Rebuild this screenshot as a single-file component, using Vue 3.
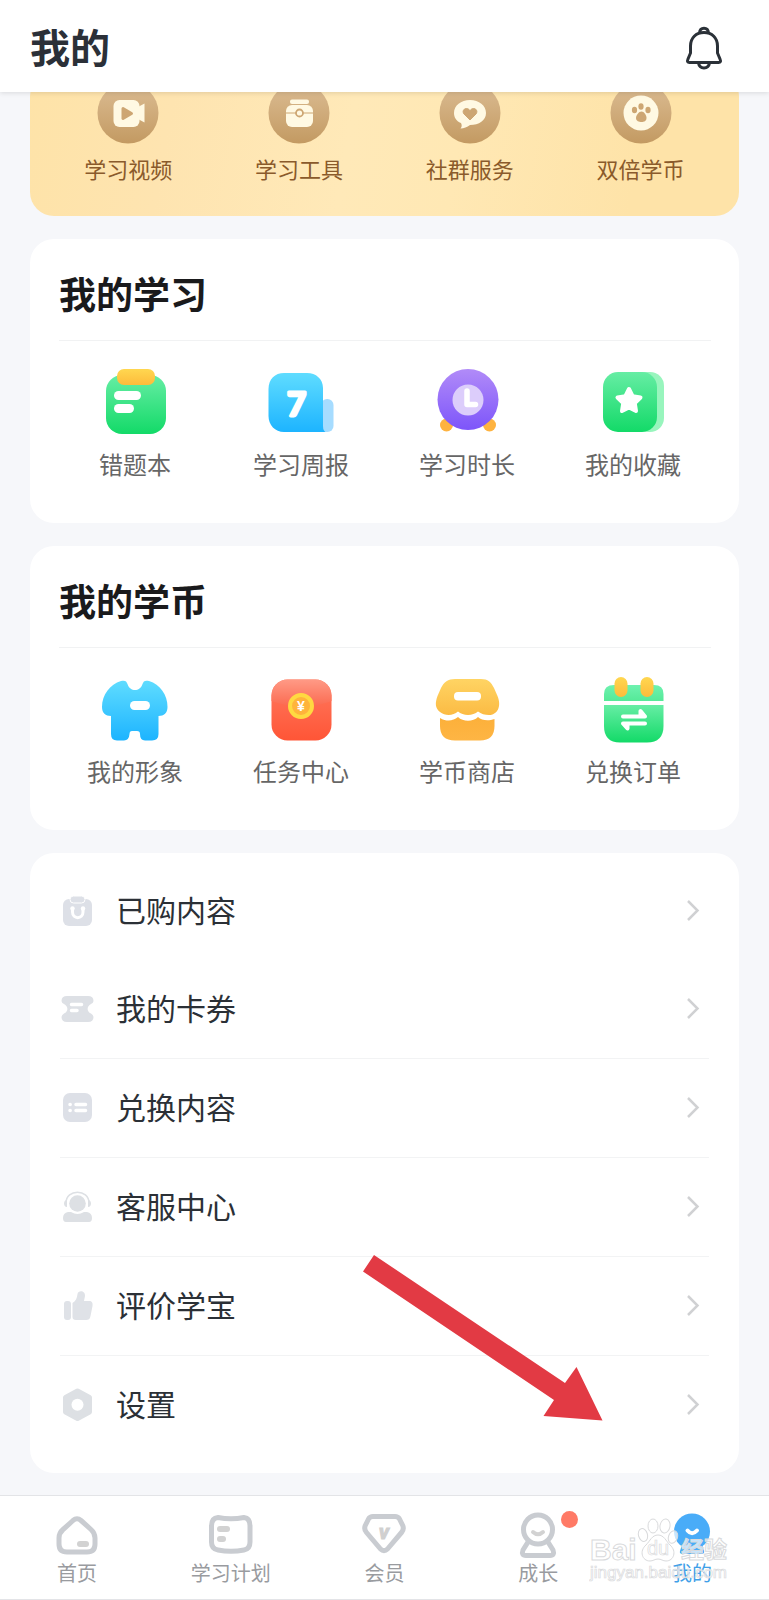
<template>
  <div class="page">
    <!-- Shared gradients -->
    <svg class="defs" aria-hidden="true">
      <defs>
        <linearGradient
          v-for="g in gradients"
          :id="g.id"
          :key="g.id"
          x1="0"
          y1="0"
          x2="0"
          y2="1"
        >
          <stop offset="0" :stop-color="g.from" />
          <stop offset="1" :stop-color="g.to" />
        </linearGradient>
      </defs>
    </svg>

    <header class="top-bar">
      <h1 class="top-title">我的</h1>
      <button class="bell-btn" type="button" aria-label="消息">
        <svg viewBox="0 0 48 48" fill="none" stroke="#2b3138" stroke-width="3" stroke-linejoin="round">
          <path d="M10.500 29V22C10.500 14 16 8.500 24 8.500S37.500 14 37.500 22V29L40 35C41 37.500 40.500 38.500 38.500 38.500H9.500C7.500 38.500 7 37.500 8 35Z" />
          <path d="M19.500 9C20 2.500 28 2.500 28.500 9" />
          <path d="M18.500 39C19.500 45.500 28.500 45.500 29.500 39" />
        </svg>
      </button>
    </header>

    <main class="content">
      <section class="banner">
        <a v-for="item in benefits" :key="item.name" class="banner-item" href="#">
          <svg class="banner-icon" viewBox="0 0 62 62" v-html="item.icon"></svg>
          <span>{{ item.name }}</span>
        </a>
      </section>

      <section v-for="card in cards" :key="card.title" class="card">
        <h2 class="card-title">{{ card.title }}</h2>
        <div class="card-grid">
          <a v-for="item in card.items" :key="item.name" class="grid-item" href="#">
            <svg class="grid-icon" viewBox="0 0 72 72" v-html="item.icon"></svg>
            <span>{{ item.name }}</span>
          </a>
        </div>
      </section>

      <section class="menu">
        <a
          v-for="row in menuRows"
          :key="row.name"
          class="menu-row"
          :class="{ lined: row.lined }"
          href="#"
        >
          <svg class="menu-icon" viewBox="0 0 36 36" v-html="row.icon"></svg>
          <span class="menu-name">{{ row.name }}</span>
          <svg class="chevron" viewBox="0 0 16 24">
            <path d="M3 2L12.500 11.500L3 21" fill="none" stroke="#d0d1d3" stroke-width="2.500" />
          </svg>
        </a>
        <svg class="pointer" viewBox="0 0 242 168" aria-hidden="true">
          <path d="M12 1L203 129L214.500 113L240.500 166.500L181.500 162L192 146L1 17.500Z" fill="#e23a44" />
        </svg>
      </section>
    </main>

    <nav class="tab-bar">
      <a
        v-for="tab in tabs"
        :key="tab.name"
        class="tab"
        :class="{ active: tab.active }"
        href="#"
      >
        <span class="tab-icon">
          <svg viewBox="0 0 48 48" v-html="tab.icon"></svg>
          <i v-if="tab.dot" class="dot"></i>
        </span>
        <span>{{ tab.name }}</span>
      </a>

      <svg class="watermark" viewBox="0 0 144 76" aria-hidden="true">
        <g fill="#fff" fill-opacity="0.7" stroke="#d9dadc" stroke-width="1">
          <ellipse cx="54" cy="22" rx="4.500" ry="6.500" transform="rotate(-16 54 22)" />
          <ellipse cx="64" cy="13" rx="5" ry="7" />
          <ellipse cx="76" cy="13" rx="5" ry="7" transform="rotate(10 76 13)" />
          <ellipse cx="84" cy="24" rx="4.500" ry="6.500" transform="rotate(20 84 24)" />
          <path d="M69 22C75 22 77 28 81 32C88 38 85 48 77 48C74 48 72 46 69 46S64 48 61 48C53 48 50 38 57 32C61 28 63 22 69 22Z" />
          <text x="1" y="47" font-size="30" font-weight="bold">Bai</text>
          <text x="58" y="42" font-size="20" stroke-width="0.700">du</text>
          <text x="92" y="45" font-size="23" font-weight="bold">经验</text>
          <text x="1" y="65" font-size="17" stroke-width="0.700">jingyan.baidu.com</text>
        </g>
      </svg>
    </nav>
  </div>
</template>

<script setup>
const gradients = [
  { id: 'bronze', from: '#dcbd94', to: '#c39a62' },
  { id: 'green', from: '#66eda4', to: '#13da68' },
  { id: 'mint', from: '#6ef2b0', to: '#55e998' },
  { id: 'yellow', from: '#ffd750', to: '#fdbb3b' },
  { id: 'blue', from: '#5fdcff', to: '#1db4ff' },
  { id: 'purple', from: '#b18bf8', to: '#7d55fa' },
  { id: 'red', from: '#ff7a60', to: '#ff5536' },
  { id: 'flap', from: '#ff9a86', to: '#fb6a50' },
  { id: 'roof', from: '#ffd463', to: '#fbbb44' },
  { id: 'shop', from: '#fcb03a', to: '#feb544' },
]

const disc = '<circle cx="31" cy="31" r="30.500" fill="url(#bronze)"/>'

const benefits = [
  {
    name: '学习视频',
    icon: `${disc}
      <rect x="16.500" y="18" width="26" height="27" rx="6" fill="#fff9e3"/>
      <path d="M41 25L47.500 21.500V40.500L41 37Z" fill="#fff9e3"/>
      <path d="M26 26.500L34.500 31.500L26 36.500Z" fill="#cda673" stroke="#cda673" stroke-width="3" stroke-linejoin="round"/>`,
  },
  {
    name: '学习工具',
    icon: `${disc}
      <rect x="22" y="17.500" width="19" height="4.500" rx="2" fill="#fff9e3"/>
      <rect x="18" y="23" width="27" height="22" rx="6" fill="#fff9e3"/>
      <path d="M18 31H45" stroke="#cda673" stroke-width="1"/>
      <circle cx="31.500" cy="31" r="3.500" fill="#fff9e3" stroke="#cda673" stroke-width="1.800"/>`,
  },
  {
    name: '社群服务',
    icon: `${disc}
      <path d="M31 18C40 18 47 23.500 47 31S40 43 31 43C28 45 25 46.500 21.500 46.500C23 45 23 43 22 41C17 39 15 35 15 31C15 23.500 22 18 31 18Z" fill="#fff9e3"/>
      <path d="M31 38L25 32C22 28 27.500 24 31 28.500C34.500 24 40 28 37 32Z" fill="#cda673" stroke="#cda673" stroke-linejoin="round"/>`,
  },
  {
    name: '双倍学币',
    icon: `${disc}
      <circle cx="31" cy="31" r="17.500" fill="#fff9e3"/>
      <g fill="#cda673">
        <ellipse cx="24.500" cy="28" rx="2.600" ry="3.300"/>
        <ellipse cx="31" cy="24.500" rx="2.600" ry="3.300"/>
        <ellipse cx="38" cy="28" rx="2.600" ry="3.300"/>
        <path d="M31.500 29.500C34 29.500 36.500 33 36.500 36S34 40 31.500 40S26 39 26 36S29 29.500 31.500 29.500Z"/>
      </g>`,
  },
]

const cards = [
  {
    title: '我的学习',
    items: [
      {
        name: '错题本',
        icon: `
          <rect x="7" y="9" width="60" height="59" rx="16" fill="url(#green)"/>
          <rect x="18" y="3" width="38" height="16" rx="7" fill="url(#yellow)"/>
          <rect x="15" y="25" width="27" height="9" rx="4.500" fill="#fff"/>
          <rect x="15" y="38" width="20" height="9" rx="4.500" fill="#fff"/>`,
      },
      {
        name: '学习周报',
        icon: `
          <rect x="56" y="33" width="12.500" height="33" rx="6" fill="#a6dcff"/>
          <path d="M19 7H42C51 7 58 13 58 22V60Q58 66 62 66H19C10 66 3.500 59 3.500 50V23C3.500 13 10 7 19 7Z" fill="url(#blue)"/>
          <text x="22" y="50" font-family="Lato, sans-serif" font-size="33" font-weight="bold" fill="#fff" stroke="#fff" stroke-width="3" stroke-linejoin="round">7</text>`,
      },
      {
        name: '学习时长',
        icon: `
          <circle cx="15.500" cy="59" r="6.500" fill="#feb340"/>
          <circle cx="58.500" cy="59" r="6.500" fill="#feb340"/>
          <circle cx="37" cy="33.500" r="30.500" fill="url(#purple)"/>
          <circle cx="37" cy="34" r="15.500" fill="#dccdfb"/>
          <path d="M36 25V38.500H44.500" fill="none" stroke="#fff" stroke-width="5.500" stroke-linecap="round" stroke-linejoin="round"/>`,
      },
      {
        name: '我的收藏',
        icon: `
          <rect x="20" y="6" width="47" height="60" rx="14" fill="#98f5bd"/>
          <rect x="6" y="6" width="54" height="60" rx="15" fill="url(#green)"/>
          <path d="M32 23L35.600 30.200L43.500 31.500L37.800 37.200L39 45L32 41.500L25 45L26.200 37.200L20.500 31.500L28.400 30.200Z" fill="#fff" stroke="#fff" stroke-width="4" stroke-linejoin="round"/>`,
      },
    ],
  },
  {
    title: '我的学币',
    items: [
      {
        name: '我的形象',
        icon: `
          <path d="M22 8C26 7 27.500 8 28.500 11C31 19 41 19 43.500 11C44.500 8 46 7 50 8C61 11 68.500 22 68.500 34C68.500 40 65 43 59.500 43V61Q59.500 67.500 53 67.500H46Q41 67.500 41 61Q41 58 38 58H33Q30.500 58 30.500 61Q30 67.500 25 67.500H18Q12 67.500 12 61V43C6.500 43 3 40 3 34C3 22 11 11 22 8Z" fill="url(#blue)"/>
          <rect x="31" y="28" width="20" height="9" rx="4.500" fill="#fff"/>`,
      },
      {
        name: '任务中心',
        icon: `
          <rect x="6.500" y="6.500" width="60" height="61" rx="16" fill="url(#red)"/>
          <path d="M6.500 28V22.500A16 16 0 0 1 22.500 6.500H50.500A16 16 0 0 1 66.500 22.500V28Q37 39 6.500 28Z" fill="url(#flap)"/>
          <circle cx="36" cy="33" r="11" fill="#ffb43b" stroke="#ffd941" stroke-width="4"/>
          <text x="36" y="38" text-anchor="middle" font-family="Liberation Sans, sans-serif" font-size="14" font-weight="bold" fill="#fff">¥</text>`,
      },
      {
        name: '学币商店',
        icon: `
          <path d="M24 6H50C57 6 60 9 63 15L66.500 23C71 34 66 42 58 42C54 42 50 41 47 38.500C42 43 32 43 27 38.500C22 43 14 43 9 39C4 35 4 30 6.500 23L10 15C13 9 17 6 24 6Z" fill="url(#roof)"/>
          <path d="M9 45C16 49 22 48 27 44C32 49 42 49 47 44C51 48 58 48 63.500 46V53Q63.500 67.500 49 67.500H24Q9 67.500 9 53Z" fill="url(#shop)"/>
          <rect x="23" y="19" width="27" height="8.500" rx="4" fill="#fff"/>`,
      },
      {
        name: '兑换订单',
        icon: `
          <path d="M17 12H57Q66.500 12 66.500 21V28H7V21Q7 12 17 12Z" fill="url(#mint)"/>
          <path d="M7 32H66.500V53Q66.500 69.500 50 69.500H23Q7 69.500 7 53Z" fill="url(#green)"/>
          <rect x="17.500" y="4" width="13" height="20" rx="6.500" fill="url(#yellow)"/>
          <rect x="43.500" y="4" width="13" height="20" rx="6.500" fill="url(#yellow)"/>
          <path d="M26 43.500H48L43.500 38V43.500M48 50.500H26L30.500 55.500V50.500" fill="#fff" stroke="#fff" stroke-width="4" stroke-linecap="round" stroke-linejoin="round"/>`,
      },
    ],
  },
]

const menuRows = [
  {
    name: '已购内容',
    icon: `
      <rect x="3" y="6" width="29" height="27" rx="6" fill="#dde0e7"/>
      <rect x="10" y="3" width="15" height="7" rx="3.500" fill="#dde0e7" stroke="#fff" stroke-width="1"/>
      <path d="M12.500 16V19C12.500 26.500 23 26.500 23 19V16" fill="none" stroke="#fff" stroke-width="3" stroke-linecap="round"/>
      <circle cx="12.500" cy="15.500" r="2.200" fill="#fff"/>
      <circle cx="23" cy="15.500" r="2.200" fill="#fff"/>`,
  },
  {
    name: '我的卡券',
    lined: true,
    icon: `
      <path d="M7 5H28Q33.500 5 33.500 10Q33.500 12 31 13C26.500 15.500 26.500 20.500 31 22.500Q33.500 24 33.500 26Q33.500 31 28 31H7Q1.500 31 1.500 26Q1.500 24 4 22.500C8.500 20.500 8.500 15.500 4 13Q1.500 12 1.500 10Q1.500 5 7 5Z" fill="#dde0e5"/>
      <path d="M11.500 13.500H21.500M11.500 19.500H17" stroke="#fff" stroke-width="3.500" stroke-linecap="round"/>`,
  },
  {
    name: '兑换内容',
    lined: true,
    icon: `
      <rect x="3" y="3" width="29" height="29" rx="7" fill="#dde0e7"/>
      <path d="M10 14.500H10.200M16 14.500H25.500M10 20.500H10.200M16 20.500H25.500" stroke="#fff" stroke-width="3.500" stroke-linecap="round"/>`,
  },
  {
    name: '客服中心',
    lined: true,
    icon: `
      <circle cx="17.500" cy="14.500" r="8.300" fill="#dde0e4"/>
      <path d="M6 14C6 -0.500 29 -0.500 29 14" fill="none" stroke="#dde0e4" stroke-width="1.500"/>
      <path d="M7 11V18C3 18 3 11 7 11ZM28 11V18C32 18 32 11 28 11Z" fill="#dde0e4"/>
      <path d="M8 23H11Q17.500 27 24 23H27Q32 24 32 29Q32 33 29 33H6Q3 33 3 29Q3 24 8 23Z" fill="#dde0e4"/>`,
  },
  {
    name: '评价学宝',
    lined: true,
    icon: `
      <rect x="4" y="13" width="7" height="19" rx="3" fill="#dfe2e7"/>
      <path d="M12.500 15C16 13 17 10 17.500 6C18 2 25.500 2 25 8L24 13H29C32 13 33 15 32.500 18L30.500 28C30 31 28.500 32 26 32H16Q12.500 32 12.500 29Z" fill="#dfe2e7"/>`,
  },
  {
    name: '设置',
    icon: `
      <path d="M17.500 4L29.500 10.500V25L17.500 31.500L5.500 25V10.500Z" fill="#dde0e4" stroke="#dde0e4" stroke-width="5" stroke-linejoin="round"/>
      <circle cx="17.500" cy="17.800" r="6" fill="#fff"/>`,
  },
]

const line = 'fill="none" stroke="#c9ccd1" stroke-width="5" stroke-linejoin="round"'

const tabs = [
  {
    name: '首页',
    icon: `
      <path d="M20 9.500Q24 6 28 9.500L38 18.500Q42 22 42 27V33Q42 41 34 41H14Q6 41 6 33V27Q6 22 10 18.500Z" ${line}/>
      <rect x="24" y="30" width="12" height="6" rx="3" fill="#d2d2d2"/>`,
  },
  {
    name: '学习计划',
    icon: `
      <path d="M11 6.500Q24 9 37 6.500Q43 7 43 15V31Q43 38 37 39Q24 41.500 11 39Q4.500 38 4.500 31V15Q4.500 7 11 6.500Z" ${line}/>
      <rect x="10" y="15" width="13" height="6" rx="3" fill="#d2d2d2"/>
      <rect x="10" y="25" width="9" height="6" rx="3" fill="#d2d2d2"/>`,
  },
  {
    name: '会员',
    icon: `
      <path d="M13 5.500H35Q38 5.500 39.500 8L42.500 14Q44.500 18 41.500 21.500L27.500 38Q24 41.500 20.500 38L6.500 21.500Q3.500 18 5.500 14L8.500 8Q10 5.500 13 5.500Z" ${line}/>
      <text x="24" y="28" text-anchor="middle" font-family="Roboto, sans-serif" font-size="21" font-weight="bold" font-style="italic" fill="#d0d0d0" stroke="#d0d0d0">v</text>`,
  },
  {
    name: '成长',
    dot: true,
    icon: `
      <circle cx="24" cy="18.500" r="14.500" ${line}/>
      <path d="M14 31L9 39Q7 44.500 12 44.500H36Q41 44.500 39 39L34 31" ${line}/>
      <path d="M19 21Q24 25.500 29 21" fill="none" stroke="#d2d2d2" stroke-width="4" stroke-linecap="round"/>`,
  },
  {
    name: '我的',
    active: true,
    icon: `
      <path d="M15 30H33L36 40Q37 43 33 43H15Q11 43 12 40Z" fill="#49acf8"/>
      <circle cx="24" cy="20.500" r="18" fill="#49acf8"/>
      <path d="M19.500 19.500Q24 25 29 19.500" fill="none" stroke="#fff" stroke-width="4" stroke-linecap="round"/>`,
  },
]
</script>

<style>
body {
  background: #f6f7fa;
}
</style>

<style scoped>
.page {
  display: flex;
  flex-direction: column;
  min-height: 100vh;
  background: #f6f7fa;
  font-family: "Noto Sans CJK SC", sans-serif;
}

.page * { box-sizing: border-box; }

.page a {
  color: inherit;
  text-decoration: none;
}

.defs {
  position: absolute;
  width: 0;
  height: 0;
}

.top-bar {
  position: sticky;
  top: 0;
  z-index: 2;
  display: flex;
  align-items: center;
  justify-content: space-between;
  height: 92px;
  padding: 4px 41px 0 30px;
  background: #fff;
  box-shadow: 0 1px 5px rgba(0, 0, 0, 0.12);
}

.top-title {
  margin: 0;
  padding-bottom: 4px;
  font-size: 40px;
  line-height: 48px;
  font-weight: 700;
  color: #2b3038;
}

.bell-btn {
  padding: 0;
  border: none;
  background: transparent;
  cursor: pointer;
}
.bell-btn svg {
  display: block;
  width: 48px;
  height: 48px;
}

.content {
  display: flex;
  flex-direction: column;
  flex: 1;
  gap: 23px;
  padding: 0 30px 22px;
}

/* The banner is partly scrolled under the top bar */
.banner {
  display: grid;
  grid-template-columns: repeat(4, 1fr);
  margin-top: -20px;
  padding: 10px 13px 32px;
  border-radius: 24px;
  background: linear-gradient(100deg, #fee3a8 0%, #fee4b0 20%, #ffe9b8 45%, #ffe8b4 60%, #fee3a8 85%);
}

.banner-item {
  display: flex;
  flex-direction: column;
  align-items: center;
  gap: 8px;
  font-size: 22px;
  line-height: 32px;
}
.banner-item span { color: #8a5a2b; }

.banner-icon {
  width: 62px;
  height: 62px;
}

.card {
  padding-bottom: 43px;
  border-radius: 24px;
  background: #fff;
}

.card-title {
  margin: 0 28px 0 29px;
  padding: 30px 0 23px;
  border-bottom: 1px solid #f1f2f3;
  font-size: 37px;
  line-height: 48px;
  font-weight: 700;
  color: #1a1a1c;
}

.card-grid {
  display: grid;
  grid-template-columns: repeat(4, 1fr);
  padding: 25px 23px 0 22px;
}

.grid-item {
  display: flex;
  flex-direction: column;
  align-items: center;
  gap: 10px;
  font-size: 24px;
  line-height: 32px;
}
.grid-item span { color: #666; }

.grid-icon {
  width: 72px;
  height: 72px;
}

.menu {
  position: relative;
  padding: 9px 30px 19px;
  border-radius: 24px;
  background: #fff;
}

.menu-row {
  display: flex;
  align-items: center;
  height: 98px;
  padding-right: 8px;
}
.menu-row.lined {
  height: 99px;
  border-bottom: 1px solid #f2f3f4;
}

.menu-icon {
  width: 36px;
  height: 36px;
}

.menu-name {
  flex: 1;
  margin-left: 20px;
  padding-bottom: 4px;
  font-size: 30px;
  line-height: 40px;
  color: #2b3036;
}

.chevron {
  width: 16px;
  height: 24px;
}

.pointer {
  position: absolute;
  right: 135px;
  bottom: 51px;
  width: 242px;
  height: 168px;
  pointer-events: none;
}

.tab-bar {
  position: sticky;
  bottom: 0;
  display: grid;
  grid-template-columns: repeat(5, 1fr);
  padding: 15px 0 14px;
  border-top: 1px solid #e3e4e7;
  border-bottom: 1px solid #e3e4e7;
  background: #fff;
}

.tab {
  display: flex;
  flex-direction: column;
  align-items: center;
  gap: 2px;
  font-size: 20px;
  line-height: 24px;
}
.tab > span:last-child { color: #999b9f; }
.tab.active > span:last-child { color: #3f9fe8; }

.tab-icon {
  position: relative;
  width: 48px;
  height: 48px;
}
.tab-icon svg {
  display: block;
  width: 48px;
  height: 48px;
}

.dot {
  position: absolute;
  top: 0;
  right: -16px;
  width: 17px;
  height: 17px;
  border-radius: 50%;
  background: #ff7a66;
}

.watermark {
  position: absolute;
  right: 36px;
  bottom: 10px;
  width: 144px;
  height: 76px;
  font-family: "Liberation Sans", "Noto Sans CJK SC", sans-serif;
  pointer-events: none;
}
</style>
